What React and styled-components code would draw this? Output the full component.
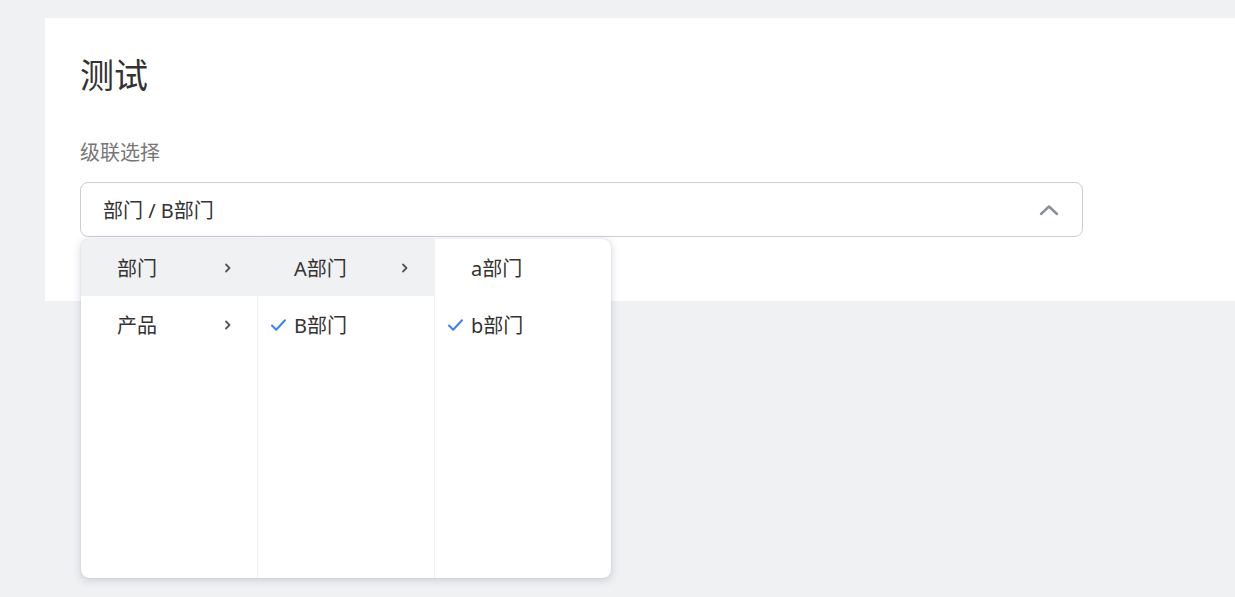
import React from 'react';
import styled, { createGlobalStyle } from 'styled-components';

const GlobalStyle = createGlobalStyle`
  html, body {
    margin: 0;
    padding: 0;
    background: #f0f1f3;
    font-family: "Noto Sans", "Noto Sans CJK SC", sans-serif;
    color: #333;
  }
`;

const Page = styled.div`
  width: 1235px;
  height: 597px;
  overflow: hidden;
  padding: 18px 0 0 45px;
  box-sizing: border-box;
`;

const Card = styled.div`
  background: #fff;
  height: 283px;
  padding: 33px 0 0 35px;
  box-sizing: border-box;
`;

const Title = styled.h1`
  margin: 0;
  font-size: 34px;
  font-weight: 400;
  line-height: 48px;
  color: #333;
`;

const Label = styled.div`
  margin-top: 40px;
  font-size: 20px;
  line-height: 28px;
  color: #777;
`;

const Field = styled.div`
  position: relative;
  width: 1003px;
  margin-top: 15px;
`;

const Input = styled.div`
  height: 55px;
  box-sizing: border-box;
  border: 1px solid #c9cdd5;
  border-radius: 8px;
  display: flex;
  align-items: center;
  justify-content: space-between;
  padding: 0 22px 0 22px;
  font-size: 20px;
  color: #333;
  background: #fff;
`;

const Menu = styled.div`
  position: absolute;
  top: 57px;
  left: 1px;
  display: flex;
  height: 339px;
  background: #fff;
  border-radius: 8px;
  box-shadow: 0 2px 8px rgba(60, 70, 100, 0.22), 0 0 1px rgba(60, 70, 100, 0.3);
  overflow: hidden;
  z-index: 2;
`;

const Column = styled.ul`
  list-style: none;
  margin: 0;
  padding: 0;
  width: 176px;
  border-left: ${p => (p.$first ? 'none' : '1px solid #eeeff1')};
`;

const Item = styled.li`
  height: 57px;
  display: flex;
  align-items: center;
  padding: 0 24px 0 12px;
  font-size: 20px;
  color: #333;
  background: ${p => (p.$active ? '#f0f1f3' : 'transparent')};
`;

const CheckSlot = styled.span`
  width: 24px;
  flex: none;
  display: flex;
  align-items: center;
  color: #3b82f6;
`;

const Text = styled.span`
  flex: 1;
`;

const Arrow = styled.span`
  color: #555;
  display: flex;
  align-items: center;
`;

const Check = () => (
  <svg width="17" height="16" viewBox="0 0 17 16" fill="none">
    <path d="M2 8.5 L6.2 12.8 L15 3.2" stroke="currentColor" strokeWidth="2" strokeLinecap="round" strokeLinejoin="round" />
  </svg>
);

const Chevron = () => (
  <svg width="10" height="10" viewBox="0 0 10 10" fill="none">
    <path d="M3 1.5 L6.5 5 L3 8.5" stroke="currentColor" strokeWidth="1.8" strokeLinecap="round" strokeLinejoin="round" />
  </svg>
);

const Up = () => (
  <svg width="22" height="14" viewBox="0 0 22 14" fill="none">
    <path d="M3 11 L11 3.5 L19 11" stroke="#8a8f99" strokeWidth="2.4" strokeLinecap="round" strokeLinejoin="round" />
  </svg>
);

const columns = [
  [
    { label: '部门', active: true, more: true },
    { label: '产品', more: true },
  ],
  [
    { label: 'A部门', active: true, more: true },
    { label: 'B部门', checked: true },
  ],
  [
    { label: 'a部门' },
    { label: 'b部门', checked: true },
  ],
];

export default function App() {
  return (
    <>
      <GlobalStyle />
      <Page>
        <Card>
          <Title>测试</Title>
          <Label>级联选择</Label>
          <Field>
            <Input>
              <span>部门 / B部门</span>
              <Up />
            </Input>
            <Menu>
              {columns.map((col, ci) => (
                <Column key={ci} $first={ci === 0}>
                  {col.map(it => (
                    <Item key={it.label} $active={it.active}>
                      <CheckSlot>{it.checked && <Check />}</CheckSlot>
                      <Text>{it.label}</Text>
                      {it.more && (
                        <Arrow>
                          <Chevron />
                        </Arrow>
                      )}
                    </Item>
                  ))}
                </Column>
              ))}
            </Menu>
          </Field>
        </Card>
      </Page>
    </>
  );
}
